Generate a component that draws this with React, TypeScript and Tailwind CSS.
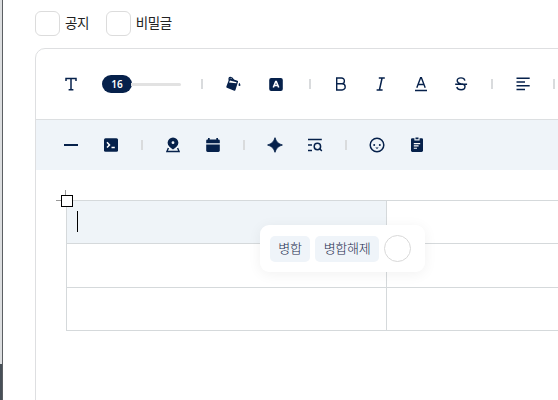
import type { ReactNode } from "react";

const iconClass = "block h-4 w-4 overflow-visible";

function Tool({ label, className = "", children }: { label: string; className?: string; children: ReactNode }) {
  return (
    <button
      type="button"
      aria-label={label}
      className={`flex h-10 w-10 shrink-0 items-center justify-center text-[#06214b] ${className}`}
    >
      <svg viewBox="0 0 16 16" className={iconClass} fill="none" stroke="currentColor" strokeWidth="1.5">
        {children}
      </svg>
    </button>
  );
}

function Separator() {
  return (
    <div className="flex w-[22px] shrink-0 justify-center">
      <div className="h-2.5 w-0.5 bg-[#d9dbdd]" />
    </div>
  );
}

function FontSizeSlider() {
  return (
    <div className="flex w-[100px] shrink-0 items-center pr-2.5 pl-[11px]">
      <div className="flex h-[18px] w-[30px] shrink-0 items-center justify-center rounded-full bg-[#06214b] pt-px text-[10px] font-semibold text-white">
        16
      </div>
      <div className="-ml-px h-[3px] flex-1 rounded-r-full bg-[#e2e2e2]" />
    </div>
  );
}

function TextToolbar() {
  return (
    <div className="flex h-[71px] items-center border-b border-[#dcdfe1] pl-[15px]">
      <Tool label="글꼴">
        <path d="M3 5V2.5h10V5M8 2.5v11.3M5.6 13.8h4.8" strokeWidth="1.5" />
      </Tool>
      <FontSizeSlider />
      <Separator />
      <Tool label="배경색">
        <path
          d="M5 3.2 12.2 5.6 9.6 13.8 2.2 10.8z"
          fill="currentColor"
          strokeWidth="1.8"
          strokeLinejoin="round"
        />
        <path d="m5 4.4 6.6 1.9-.4 1L4 6.5z" fill="#fff" stroke="none" />
        <path d="M4.4 4.2C3.6 2.6 4 1.4 5.4 1.3c1.4 0 2.3.8 3.2 2.6" strokeWidth="1.2" />
        <path d="M14.5 6.8c1 1.5 1.5 3.2-.1 3.3-1.4-.2-.9-1.9.1-3.3z" fill="currentColor" stroke="none" />
      </Tool>
      <Tool label="글자색" className="mx-[3px]">
        <rect x="1.2" y="2" width="13.6" height="13" rx="2" fill="currentColor" stroke="none" />
        <path d="m5.3 11.5 2.4-6h.6l2.4 6M6.4 9.5h3.2" stroke="#fff" strokeWidth="1.6" />
      </Tool>
      <Separator />
      <Tool label="굵게">
        <path d="M3.7 2h4.8a2.9 2.9 0 0 1 0 5.8H3.7zM3.7 7.8h5.4a3.1 3.1 0 0 1 0 6.2H3.7z" strokeWidth="1.4" />
      </Tool>
      <Tool label="기울임">
        <path d="M5.8 2h6M3.6 14h6M9.1 2 6.4 14" />
      </Tool>
      <Tool label="밑줄">
        <path d="m3.8 11.7 3.8-9.9h.8l3.8 9.9M5.1 8.5h5.8M2 14.5h12" strokeWidth="1.4" />
      </Tool>
      <Tool label="취소선">
        <path
          d="M11.9 4.6C11.5 2.8 10 1.9 8 1.9c-2.2 0-3.8 1.1-3.8 2.8S5.4 7.2 8 8h1.6c1.6.4 2.4 1.4 2.4 2.6 0 2-1.6 3.2-3.9 3.2-2.2 0-3.8-1-4.3-2.8M2.2 8.3h11.9"
          strokeWidth="1.4"
        />
      </Tool>
      <Separator />
      <Tool label="정렬">
        <path d="M1.5 2.3h13.2M1.5 6h8.5M1.5 9.7h13.2M1.5 13.4h8.5" />
      </Tool>
      <Separator />
    </div>
  );
}

function InsertToolbar() {
  return (
    <div className="flex h-[50px] items-center bg-[#eff4f9] pl-[15px]">
      <Tool label="구분선">
        <path d="M1 8h14" strokeWidth="2.2" />
      </Tool>
      <Tool label="코드">
        <rect x="1" y="1.2" width="14" height="13.6" rx="1.5" fill="currentColor" stroke="none" />
        <path d="m4 5.3 2.5 2.6L4 10.5M8.5 10.6h3.3" stroke="#fff" />
      </Tool>
      <Separator />
      <Tool label="지도">
        <path
          d="M8 .5a5.4 5.4 0 0 1 5.4 5.2C13.4 8.4 10.8 10.8 8 12.4 5.2 10.8 2.6 8.4 2.6 5.7A5.4 5.4 0 0 1 8 .5z"
          fill="currentColor"
          stroke="none"
        />
        <circle cx="8" cy="5.7" r="1.4" fill="#eff4f9" stroke="none" />
        <path d="M3.4 11 1.9 14.5h12.2L12.6 11" strokeWidth="1.4" />
      </Tool>
      <Tool label="일정">
        <path
          d="M1.2 6.3V3.7c0-.8.6-1.3 1.4-1.3H3V1h1.7v1.4h6.6V1H13v1.4h.4c.8 0 1.4.5 1.4 1.3v2.6zM1.2 7.5h13.6v6c0 .8-.6 1.4-1.4 1.4H2.6c-.8 0-1.4-.6-1.4-1.4z"
          fill="currentColor"
          stroke="none"
        />
      </Tool>
      <Separator />
      <Tool label="AI">
        <path
          d="M8 .7c1.2 3.7 2.8 5.8 7.4 7.3C10.8 9.5 9.2 11.6 8 15.3 6.8 11.6 5.2 9.5.6 8 5.2 6.5 6.8 4.4 8 .7z"
          fill="currentColor"
          strokeWidth=".9"
          strokeLinejoin="round"
        />
      </Tool>
      <Tool label="찾기">
        <path d="M1 2.6h13.8M1 8h4M1 13.4h4M12.8 11.8l2 2.2" />
        <circle cx="10.4" cy="9.5" r="3.2" />
      </Tool>
      <Separator />
      <Tool label="이모티콘">
        <circle cx="8" cy="8" r="6.8" />
        <circle cx="5.2" cy="8" r="1" fill="currentColor" stroke="none" />
        <circle cx="10.8" cy="8" r="1" fill="currentColor" stroke="none" />
        <path d="M6.3 10.4h3.4L8 12z" fill="currentColor" stroke="none" />
      </Tool>
      <Tool label="템플릿">
        <path
          d="M3.4 1.2h2v2.2h5.2V1.2h2c.8 0 1.4.5 1.4 1.3v11.1c0 .8-.6 1.4-1.4 1.4H3.4c-.8 0-1.4-.6-1.4-1.4V2.5c0-.8.6-1.3 1.4-1.3z"
          fill="currentColor"
          stroke="none"
        />
        <path d="M6.5.4h3v1.9h-3z" fill="currentColor" stroke="none" />
        <path d="M4.8 6.6h6.4M4.8 8.9h4.8M4.8 11.2h3.2" stroke="#fff" strokeWidth="1.1" />
      </Tool>
    </div>
  );
}

function Option({ label }: { label: string }) {
  return (
    <label className="flex items-center gap-[5px]">
      <span className="h-[25px] w-[25px] rounded-md border border-[#dcdcdc] bg-white" />
      <span className="text-[13.5px] leading-none tracking-[-0.5px] whitespace-nowrap text-[#222]">{label}</span>
    </label>
  );
}

function MergeMenu() {
  return (
    <div className="absolute top-[25px] left-[194px] flex h-[47px] w-[165px] items-center gap-[5px] rounded-[9px] bg-white pl-2.5 text-[13px] font-light text-[#1c2c4e] shadow-[0_2px_14px_rgba(0,0,0,0.06)]">
      <button type="button" className="h-[26px] w-10 rounded-[5px] bg-[#eff4f9] pt-px tracking-[-0.3px] whitespace-nowrap">
        병합
      </button>
      <button type="button" className="h-[26px] w-16 rounded-[5px] bg-[#eff4f9] pt-px tracking-[-0.3px] whitespace-nowrap">
        병합해제
      </button>
      <span className="h-[27px] w-[27px] rounded-full border border-[#d8d8d8]" />
    </div>
  );
}

function TableEditor() {
  return (
    <div className="relative mt-[30px] ml-[30px] w-[641px]">
      <div className="grid grid-cols-2 grid-rows-[43px_44px_43px] border-t border-l border-[#d5d9db]">
        <div className="border-r border-b border-[#d5d9db] bg-[#eff4f8] pt-2.5 pl-2.5">
          <div className="h-[21px] w-px bg-black" />
        </div>
        <div className="border-r border-b border-[#d5d9db]" />
        <div className="border-r border-b border-[#d5d9db]" />
        <div className="border-r border-b border-[#d5d9db]" />
        <div className="border-r border-b border-[#d5d9db]" />
        <div className="border-r border-b border-[#d5d9db]" />
      </div>
      <div className="absolute top-0 -left-2.5 h-px w-[5px] bg-[#999]" />
      <div className="absolute -top-2.5 left-[-1px] h-[5px] w-px bg-[#999]" />
      <div className="absolute -top-[5px] -left-[5px] h-3 w-3 border border-black bg-white" />
      <MergeMenu />
    </div>
  );
}

export default function App() {
  return (
    <div className="flex h-[400px] w-[558px] overflow-hidden bg-white font-['Noto_Sans','Noto_Sans_CJK_KR',sans-serif]">
      <div className="flex w-[3px] shrink-0 flex-col border-r border-[#5c5f63]">
        <div className="h-[364px] bg-[#dcdee0]" />
        <div className="flex-1 bg-[#474f57]" />
      </div>
      <main className="min-w-0 flex-1 pt-[11px] pl-8">
        <div className="flex h-[25px] gap-[17px]">
          <Option label="공지" />
          <Option label="비밀글" />
        </div>
        <section className="mt-3 h-[400px] w-[720px] overflow-hidden rounded-[10px] border border-[#dedfe1]">
          <TextToolbar />
          <InsertToolbar />
          <TableEditor />
        </section>
      </main>
    </div>
  );
}
